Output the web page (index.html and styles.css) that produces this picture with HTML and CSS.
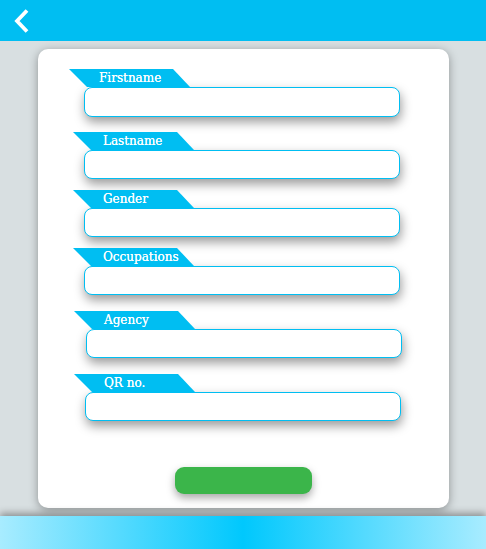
FILE: index.html
```html
<!DOCTYPE html>
<html>
<head>
<meta charset="utf-8">
<link rel="stylesheet" href="styles.css">
</head>
<body>
<header class="topbar">
  <button class="back" aria-label="Back">
    <svg width="18" height="24" viewBox="0 0 18 24"><path d="M14 1.5 L4 12 L14 22.5" fill="none" stroke="#fff" stroke-width="3.8" stroke-linecap="butt" stroke-linejoin="miter"/></svg>
  </button>
</header>
<main class="stage">
  <section class="card">
    <div class="field f1"><span class="tag">Firstname</span><div class="input"></div></div>
    <div class="field f2"><span class="tag">Lastname</span><div class="input"></div></div>
    <div class="field f3"><span class="tag">Gender</span><div class="input"></div></div>
    <div class="field f4"><span class="tag">Occupations</span><div class="input"></div></div>
    <div class="field f5"><span class="tag">Agency</span><div class="input"></div></div>
    <div class="field f6"><span class="tag">QR no.</span><div class="input"></div></div>
    <div class="actions"><button class="submit"></button></div>
  </section>
</main>
<footer class="bottombar"></footer>
</body>
</html>
```

FILE: styles.css
```css
* { box-sizing: border-box; }
html, body { margin: 0; padding: 0; }
body {
  width: 486px;
  height: 549px;
  overflow: hidden;
  background: #d8dfe1;
  font-family: "DejaVu Serif", serif;
  display: flex;
  flex-direction: column;
}
.topbar {
  height: 41px;
  background: #00bef2;
  display: flex;
  align-items: center;
  padding-left: 13px;
  position: relative;
  z-index: 2;
}
.back {
  border: 0;
  background: none;
  padding: 0;
  width: 18px;
  height: 24px;
  display: block;
}
.back svg { display: block; }
.stage {
  height: 475px;
  padding: 8px 0 0 38px;
}
.card {
  width: 411px;
  height: 459px;
  background: #fff;
  border-radius: 10px;
  box-shadow: 0 2px 10px rgba(0,0,0,0.35);
  padding-top: 20px;
  display: flex;
  flex-direction: column;
}
.field {
  display: flex;
  flex-direction: column;
  align-items: flex-start;
}
.tag {
  display: block;
  width: 121px;
  height: 18px;
  line-height: 18px;
  background: #00bef2;
  color: #fff;
  font-size: 12px;
  padding-left: 30px;
  white-space: nowrap;
  text-shadow: 0 0 0.4px #fff;
  clip-path: polygon(0 0, 104px 0, 100% 100%, 18px 100%);
}
.input {
  width: 316px;
  height: 29px;
  border: 1px solid #00bef2;
  border-radius: 8px;
  background: #fff;
  box-shadow: 1px 5px 11px rgba(0,0,0,0.4);
}
.f1 .tag { margin-left: 31px; }
.f1 .input { margin-left: 46px; height: 30px; }
.f2 { margin-top: 15px; }
.f2 .tag { margin-left: 35px; }
.f2 .input { margin-left: 46px; }
.f3 { margin-top: 11px; }
.f3 .tag { margin-left: 35px; }
.f3 .input { margin-left: 46px; }
.f4 { margin-top: 11px; }
.f4 .tag { margin-left: 35px; }
.f4 .input { margin-left: 46px; }
.f5 { margin-top: 16px; }
.f5 .tag { margin-left: 36px; }
.f5 .input { margin-left: 48px; }
.f6 { margin-top: 16px; }
.f6 .tag { margin-left: 36px; }
.f6 .input { margin-left: 47px; }
.actions {
  margin-top: 46px;
  display: flex;
  justify-content: center;
}
.submit {
  width: 137px;
  height: 27px;
  border: 0;
  border-radius: 9px;
  background: #3bb54a;
  box-shadow: 0 4px 8px rgba(0,0,0,0.35);
}
.bottombar {
  height: 33px;
  background: linear-gradient(90deg, #a8ecff 0%, #00c8fd 50%, #a8ecff 100%);
  box-shadow: 0 -3px 7px rgba(0,0,0,0.35);
  position: relative;
}
```
